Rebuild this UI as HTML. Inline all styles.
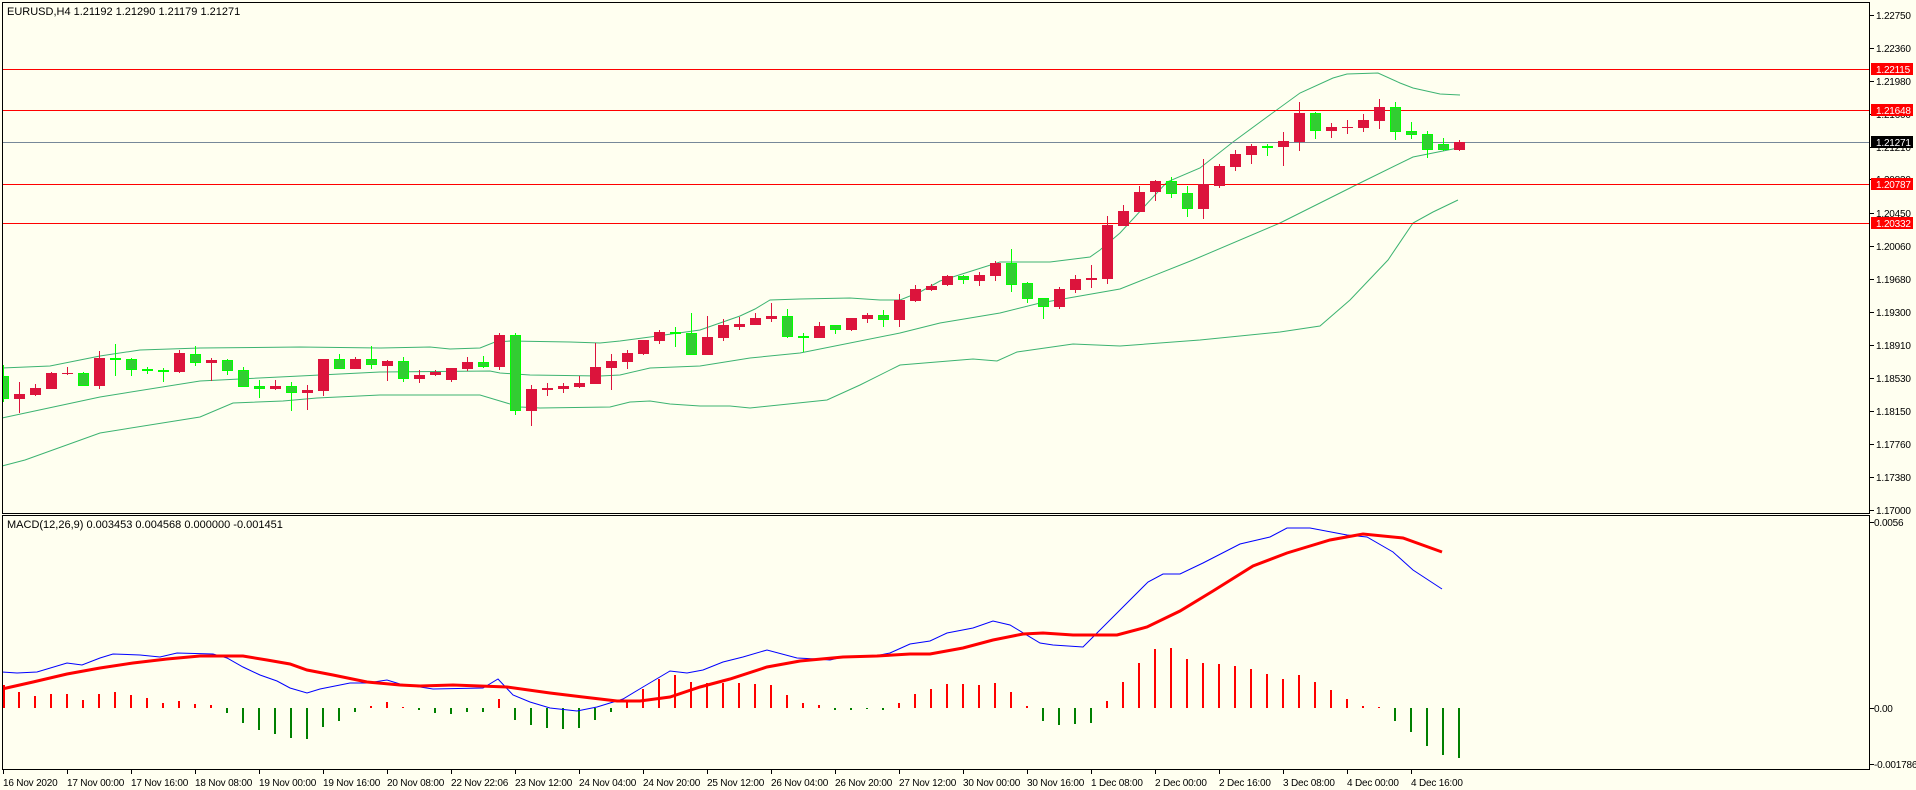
<!DOCTYPE html>
<html><head><meta charset="utf-8"><style>
html,body{margin:0;padding:0;background:#fffff0;}
svg{display:block;}
text{font-family:"Liberation Sans",sans-serif;font-size:11px;fill:#000;}
.ax text,text.ax{font-size:10px;letter-spacing:-0.2px;}
.w{fill:#fff;}
</style></head><body>
<svg id="s" width="1916" height="790" viewBox="0 0 1916 790" xmlns="http://www.w3.org/2000/svg" shape-rendering="crispEdges">
<rect width="1916" height="790" fill="#fffff0"/>
<g id="bands" fill="none" stroke="#3cb371" stroke-width="1" shape-rendering="auto">
<polyline points="2,368 50,366 100,356 140,350 200,348 300,347 380,348 430,347 450,349 480,348 495,342 510,341 570,342 600,343 620,341 650,337 700,330 740,316 755,309 770,300 800,299 850,298 880,300 900,300 920,292 940,281 1000,262 1050,262 1090,257 1100,250 1120,233 1167,182 1200,168 1233,142 1267,117 1300,93 1333,78 1347,74 1378,73 1400,83 1413,88 1440,94 1460,95"/>
<polyline points="2,418 100,397 200,381 300,376 380,372 490,371 500,373 530,375 600,376 620,375 650,368 700,366 750,358 800,353 900,333 940,323 1000,313 1040,303 1120,289 1193,260 1280,223 1360,183 1413,157 1458,148"/>
<polyline points="2,466 25,460 100,433 200,417 233,403 283,401 317,398 380,395 480,395 500,401 520,407 540,408 610,407 630,402 650,401 670,404 700,406 730,406 750,408 827,400 860,385 900,365 973,359 997,361 1017,352 1073,344 1120,346 1200,340 1280,332 1320,326 1350,300 1388,260 1413,223 1433,212 1458,200"/>
</g>
<g stroke-width="1">
<line x1="2" y1="69.5" x2="1870" y2="69.5" stroke="#ff0000"/>
<line x1="2" y1="110.5" x2="1870" y2="110.5" stroke="#ff0000"/>
<line x1="2" y1="142.5" x2="1870" y2="142.5" stroke="#778899"/>
<line x1="2" y1="184.5" x2="1870" y2="184.5" stroke="#ff0000"/>
<line x1="2" y1="223.5" x2="1870" y2="223.5" stroke="#ff0000"/>
</g>
<g id="candles"></g>
<g id="hist"></g>
<g fill="none" shape-rendering="auto">
<polyline stroke="#0000ff" stroke-width="1" points="2,672 17,673 37,672 67,663 82,665 100,658 113,654 140,655 160,657 177,653 213,654 227,658 243,667 260,675 277,681 290,688 307,693 320,689 350,683 367,683 387,680 400,684 420,687 433,689 483,688 498,679 513,695 530,702 550,708 577,711 597,707 623,699 643,687 670,671 687,673 703,670 723,662 743,657 767,650 797,658 817,659 830,660 843,657 870,657 890,653 910,644 930,641 947,633 973,628 993,621 1010,625 1040,643 1053,645 1083,647 1123,607 1148,582 1163,574 1180,574 1203,563 1240,544 1270,537 1287,528 1310,528 1347,535 1367,537 1393,552 1413,570 1442,589"/>
<polyline stroke="#ff0000" stroke-width="3" points="2,689 33,682 67,674 100,668 133,663 167,659 200,656 243,656 267,660 290,664 307,670 333,675 367,682 400,685 420,686 453,685 507,687 550,693 583,697 617,701 640,701 670,697 700,687 730,679 767,667 800,661 843,657 877,656 910,654 930,654 963,648 993,640 1023,634 1043,633 1073,635 1117,635 1147,627 1180,611 1213,591 1253,566 1287,553 1330,540 1363,534 1403,538 1442,552"/>
</g>
<rect x="0" y="0" width="2" height="790" fill="#fffff0"/>
<g fill="none" stroke="#000" stroke-width="1">
<rect x="2.5" y="2.5" width="1867" height="511"/>
<rect x="2.5" y="515.5" width="1867" height="254"/>
</g>
<text x="7" y="15">EURUSD,H4  1.21192 1.21290 1.21179 1.21271</text>
<text x="7" y="528">MACD(12,26,9) 0.003453 0.004568 0.000000 -0.001451</text>
<g id="ticks" stroke="#000"></g>
<g class="ax">
<text x="1876" y="19">1.22750</text>
<text x="1876" y="52">1.22360</text>
<text x="1876" y="85">1.21980</text>
<text x="1876" y="118">1.21600</text>
<text x="1876" y="151">1.21210</text>
<text x="1876" y="183">1.20830</text>
<text x="1876" y="217">1.20450</text>
<text x="1876" y="250">1.20060</text>
<text x="1876" y="283">1.19680</text>
<text x="1876" y="316">1.19300</text>
<text x="1876" y="349">1.18910</text>
<text x="1876" y="382">1.18530</text>
<text x="1876" y="415">1.18150</text>
<text x="1876" y="448">1.17760</text>
<text x="1876" y="481">1.17380</text>
<text x="1876" y="514">1.17000</text>
<text x="1874" y="526">0.0056</text>
<text x="1874" y="712">0.00</text>
<text x="1874" y="768">-0.001786</text>
</g>
<g class="ax">
<rect x="1871" y="63" width="42" height="12" fill="#ff0000"/><text class="w" x="1876" y="73">1.22115</text>
<rect x="1871" y="104" width="42" height="12" fill="#ff0000"/><text class="w" x="1876" y="114">1.21648</text>
<rect x="1871" y="136" width="42" height="12" fill="#000"/><text class="w" x="1876" y="146">1.21271</text>
<rect x="1871" y="178" width="42" height="12" fill="#ff0000"/><text class="w" x="1876" y="188">1.20787</text>
<rect x="1871" y="217" width="42" height="12" fill="#ff0000"/><text class="w" x="1876" y="227">1.20332</text>
</g>
<g class="ax">
<text x="3" y="786">16 Nov 2020</text>
<text x="67" y="786">17 Nov 00:00</text>
<text x="131" y="786">17 Nov 16:00</text>
<text x="195" y="786">18 Nov 08:00</text>
<text x="259" y="786">19 Nov 00:00</text>
<text x="323" y="786">19 Nov 16:00</text>
<text x="387" y="786">20 Nov 08:00</text>
<text x="451" y="786">22 Nov 22:06</text>
<text x="515" y="786">23 Nov 12:00</text>
<text x="579" y="786">24 Nov 04:00</text>
<text x="643" y="786">24 Nov 20:00</text>
<text x="707" y="786">25 Nov 12:00</text>
<text x="771" y="786">26 Nov 04:00</text>
<text x="835" y="786">26 Nov 20:00</text>
<text x="899" y="786">27 Nov 12:00</text>
<text x="963" y="786">30 Nov 00:00</text>
<text x="1027" y="786">30 Nov 16:00</text>
<text x="1091" y="786">1 Dec 08:00</text>
<text x="1155" y="786">2 Dec 00:00</text>
<text x="1219" y="786">2 Dec 16:00</text>
<text x="1283" y="786">3 Dec 08:00</text>
<text x="1347" y="786">4 Dec 00:00</text>
<text x="1411" y="786">4 Dec 16:00</text>
</g>
</svg>
<script>
var NS="http://www.w3.org/2000/svg";
function R(p,x,y,w,h,f,s){var r=document.createElementNS(NS,"rect");r.setAttribute("x",x);r.setAttribute("y",y);r.setAttribute("width",w);r.setAttribute("height",Math.max(h,1));r.setAttribute("fill",f);if(s){r.setAttribute("stroke",s);r.setAttribute("stroke-width",1);}p.appendChild(r);}
var C="g365,402,376,399|r382,413,394,399|r384,396,388,395|r372,389,373,389|r367,375,373,374|g372,386,373,386|r351,389,358,386|g344,376,358,360|g358,376,359,370|g367,374,369,371|g368,382,370,372|r350,373,353,372|g346,366,354,363|r358,381,360,363|g359,375,360,371|g367,387,370,387|g380,398,386,389|r380,390,386,389|g382,411,386,393|r385,410,390,393|r359,396,359,391|g354,369,359,369|r357,369,359,369|g346,369,359,365|r360,381,361,366|g357,382,361,379|r370,383,375,379|r370,376,372,375|r368,382,368,380|r357,371,362,369|g356,368,362,367|r333,370,335,367|g333,415,335,411|r385,426,389,411|r383,396,388,390|r383,393,386,389|r376,388,383,387|r343,384,367,384|r354,390,361,368|r350,369,353,362|r340,355,340,354|r330,344,332,341|g327,347,332,334|g313,355,333,355|r316,355,337,355|r319,341,325,338|r317,330,324,327|r313,325,318,325|r303,322,316,319|g309,338,316,337|g333,352,336,338|r322,338,326,338|g325,334,325,330|r318,331,318,330|r313,323,315,319|g310,327,315,320|r294,327,300,320|r285,302,289,301|r284,291,286,290|r275,286,276,285|g275,284,276,280|r272,286,275,281|r261,281,263,276|g249,292,263,285|g282,303,283,299|g298,319,298,307|r287,309,289,307|r275,293,279,290|r265,288,278,280|r216,284,225,279|r205,226,211,226|r186,212,192,212|r180,201,181,192|g177,198,181,194|g186,217,193,209|r159,219,184,209|r164,188,166,186|r150,171,154,167|r144,164,146,155|g144,156,146,147|r132,166,141,147|r102,151,113,142|g112,139,113,131|r123,138,127,131|r120,134,127,128|r114,132,120,128|r99,129,107,121|g102,140,107,132|g122,139,131,135|g131,158,134,150|g138,151,144,150|r140,151,142,150".split("|");
var cg=document.getElementById("candles");
C.forEach(function(s,i){var g=s[0]=="g";var v=s.slice(1).split(",").map(Number);var c=3+16*i;
 var col=g?"#00ff00":"#dc143c";
 R(cg,c,v[0],1,v[1]-v[0],col);
 var x=c-5,w=11;if(x<3){w-=3-x;x=3;}
 if(g)R(cg,x+0.5,v[2]+0.5,w-1,v[3]-v[2]-1,"#32cd32","#00ff00");else R(cg,x,v[2],w,v[3]-v[2],"#dc143c");
});
var H="r685,r692,r696,r694,r694,r700,r694,r692,r695,r698,r703,r701,r704,r705,g713,g723,g730,g734,g738,g739,g727,g721,g712,r706,r702,r707,g710,g713,g714,g712,g712,r699,g720,g725,g728,g729,g728,g720,g712,r702,r689,r679,r675,r682,r683,r683,r683,r684,r685,r695,r703,r705,g710,g710,g709,g710,r703,r694,r689,r684,r684,r685,r683,r692,r706,g721,g725,g724,g723,r701,r682,r663,r649,r648,r659,r663,r664,r666,r669,r674,r679,r675,r682,r690,r699,r706,r707,g721,g732,g746,g755,g758".split(",");
var hg=document.getElementById("hist");
H.forEach(function(s,i){var y=+s.slice(1);var c=3+16*i;var x=Math.max(3,c-1);
 if(s[0]=="r")R(hg,x,y,2,708-y,"#ff0000");else R(hg,x,708,2,y-708,"#008000");});
var tg=document.getElementById("ticks");
function L(x1,y1,x2,y2){var l=document.createElementNS(NS,"line");l.setAttribute("x1",x1);l.setAttribute("y1",y1);l.setAttribute("x2",x2);l.setAttribute("y2",y2);tg.appendChild(l);}
[15,48,81,114,147,179,213,246,279,312,345,378,411,444,477,510,522,708,764].forEach(function(y){L(1870,y+0.5,1874,y+0.5);});
for(var k=0;k<23;k++){var x=3+64*k+0.5;L(x,770,x,774);}
</script>
</body></html>
